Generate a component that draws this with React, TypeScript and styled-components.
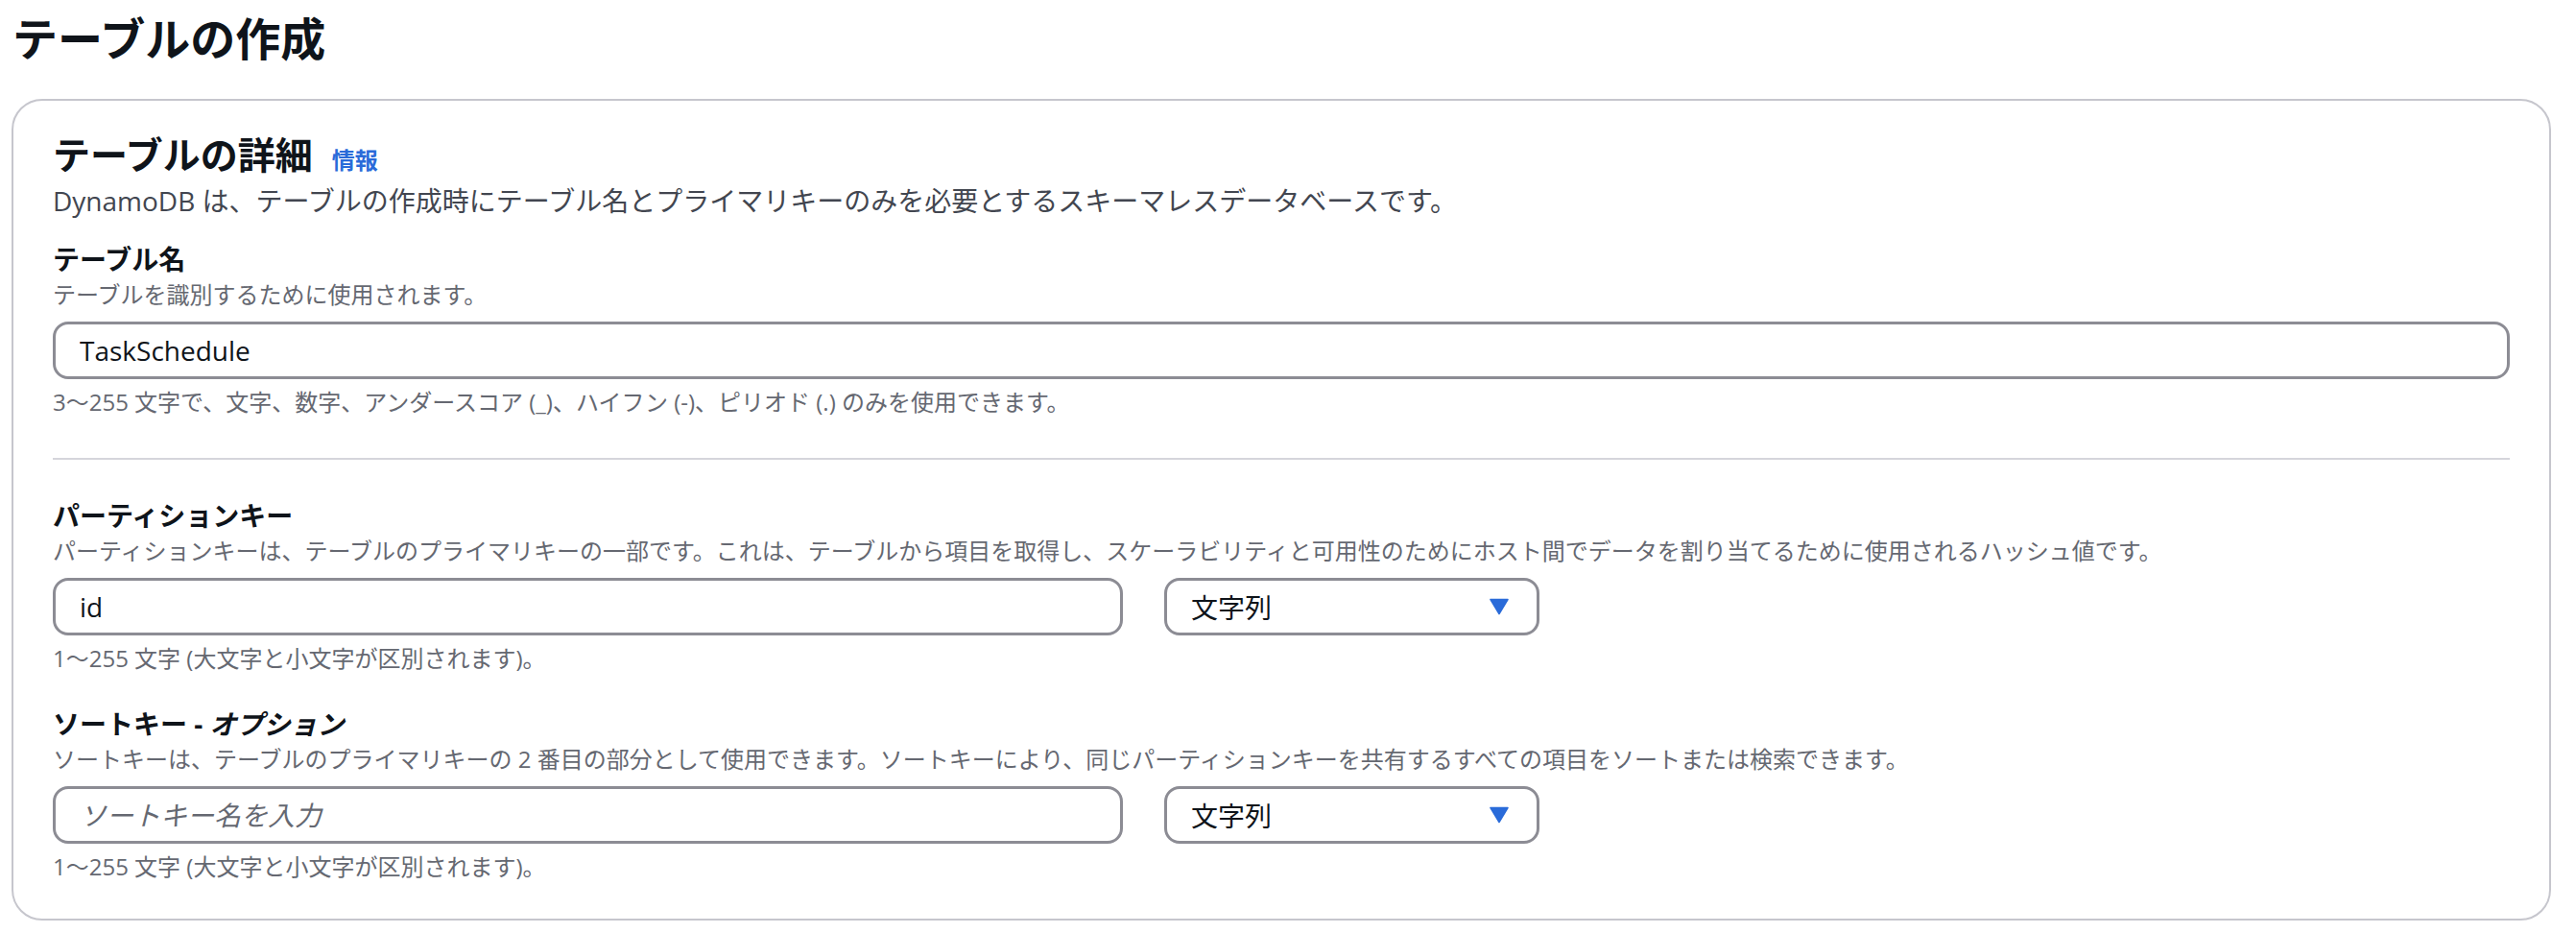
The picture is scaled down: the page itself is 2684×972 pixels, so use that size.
import React from "react";
import styled, { createGlobalStyle } from "styled-components";

const GlobalStyle = createGlobalStyle`
  html, body {
    margin: 0;
    padding: 0;
    background: #ffffff;
  }
  body {
    font-family: "Open Sans", "Noto Sans CJK JP", sans-serif;
    color: #0f141a;
    -webkit-font-smoothing: antialiased;
  }
  * { box-sizing: border-box; }
`;

const Page = styled.main`
  padding: 10px 26px 14px 12px;
`;

const PageTitle = styled.h1`
  margin: 0 0 0 1px;
  font-size: 47px;
  line-height: 60px;
  font-weight: 700;
  color: #0f141a;
`;

const Container = styled.section`
  margin-top: 33px;
  border: 2px solid #c6c6cd;
  border-radius: 32px;
  padding: 32px 41px 38px 41px;
  background: #ffffff;
`;

const HeadingRow = styled.div`
  display: flex;
  align-items: baseline;
  gap: 20px;
`;

const SectionTitle = styled.h2`
  margin: 0;
  font-size: 39px;
  line-height: 48px;
  font-weight: 700;
  color: #0f141a;
`;

const InfoLink = styled.a`
  font-size: 24px;
  line-height: 32px;
  font-weight: 700;
  color: #2a6bd9;
  text-decoration: none;
`;

const SectionDescription = styled.p`
  margin: 4px 0 0 0;
  font-size: 28px;
  line-height: 40px;
  color: #424650;
`;

const Field = styled.div<{ $gap: number }>`
  margin-top: ${(p) => p.$gap}px;
`;

const Label = styled.div`
  font-size: 28px;
  line-height: 40px;
  font-weight: 700;
  color: #0f141a;
`;

const Optional = styled.i`
  font-style: italic;
`;

const Hint = styled.div`
  font-size: 24px;
  line-height: 33px;
  color: #656871;
`;

const Controls = styled.div`
  margin-top: 12px;
  display: flex;
  gap: 43px;
`;

const TextInput = styled.input<{ $width?: number }>`
  width: ${(p) => (p.$width ? `${p.$width}px` : "100%")};
  height: 60px;
  border: 3px solid #8c8c94;
  border-radius: 16px;
  padding: 0 25px;
  font-family: "Open Sans", "Noto Sans CJK JP", sans-serif;
  font-size: 28px;
  color: #0f141a;
  background: #ffffff;
  outline: none;
  &::placeholder {
    color: #656871;
    font-style: italic;
  }
`;

const SelectBox = styled.button`
  width: 391px;
  height: 60px;
  border: 3px solid #8c8c94;
  border-radius: 16px;
  padding: 0 29px 0 25px;
  display: flex;
  align-items: center;
  justify-content: space-between;
  background: #ffffff;
  font-family: "Open Sans", "Noto Sans CJK JP", sans-serif;
  font-size: 28px;
  color: #0f141a;
  cursor: pointer;
`;

const Constraint = styled.div`
  margin-top: 8px;
  font-size: 24px;
  line-height: 32px;
  color: #656871;
`;

const Divider = styled.hr`
  margin: 42px 0 38px 0;
  border: none;
  height: 2px;
  background: #d5d5db;
`;

const Caret = () => (
  <svg width="20" height="18" viewBox="0 0 20 18" aria-hidden="true">
    <path d="M1 1.5 L19 1.5 L10 16.5 Z" fill="#2a6bd9" stroke="#2a6bd9" strokeWidth="1.5" strokeLinejoin="round" />
  </svg>
);

const Select = ({ value }: { value: string }) => (
  <SelectBox type="button">
    <span>{value}</span>
    <Caret />
  </SelectBox>
);

export default function App() {
  return (
    <>
      <GlobalStyle />
      <Page>
        <PageTitle>テーブルの作成</PageTitle>
        <Container>
          <HeadingRow>
            <SectionTitle>テーブルの詳細</SectionTitle>
            <InfoLink href="#">情報</InfoLink>
          </HeadingRow>
          <SectionDescription>
            DynamoDB は、テーブルの作成時にテーブル名とプライマリキーのみを必要とするスキーマレスデータベースです。
          </SectionDescription>

          <Field $gap={21}>
            <Label>テーブル名</Label>
            <Hint>テーブルを識別するために使用されます。</Hint>
            <Controls>
              <TextInput defaultValue="TaskSchedule" />
            </Controls>
            <Constraint>
              3〜255 文字で、文字、数字、アンダースコア (_)、ハイフン (-)、ピリオド (.) のみを使用できます。
            </Constraint>
          </Field>

          <Divider />

          <Field $gap={0}>
            <Label>パーティションキー</Label>
            <Hint>
              パーティションキーは、テーブルのプライマリキーの一部です。これは、テーブルから項目を取得し、スケーラビリティと可用性のためにホスト間でデータを割り当てるために使用されるハッシュ値です。
            </Hint>
            <Controls>
              <TextInput $width={1115} defaultValue="id" />
              <Select value="文字列" />
            </Controls>
            <Constraint>1〜255 文字 (大文字と小文字が区別されます)。</Constraint>
          </Field>

          <Field $gap={32}>
            <Label>
              ソートキー - <Optional>オプション</Optional>
            </Label>
            <Hint>
              ソートキーは、テーブルのプライマリキーの 2 番目の部分として使用できます。ソートキーにより、同じパーティションキーを共有するすべての項目をソートまたは検索できます。
            </Hint>
            <Controls>
              <TextInput $width={1115} placeholder="ソートキー名を入力" />
              <Select value="文字列" />
            </Controls>
            <Constraint>1〜255 文字 (大文字と小文字が区別されます)。</Constraint>
          </Field>
        </Container>
      </Page>
    </>
  );
}
